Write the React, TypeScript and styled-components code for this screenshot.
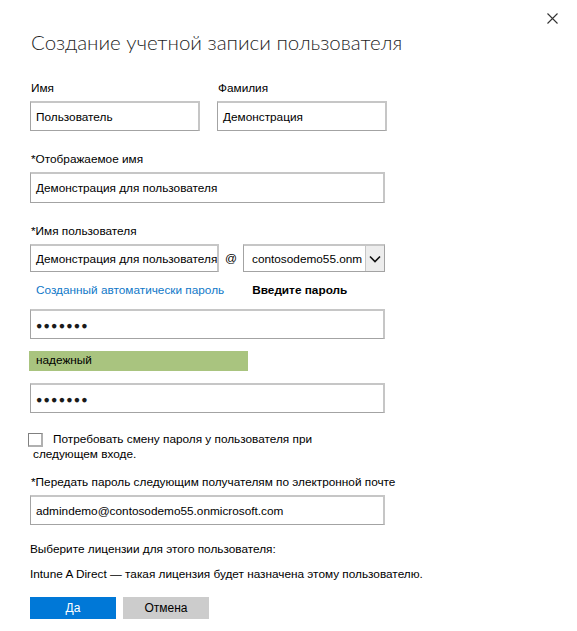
import React from "react";
import styled, { createGlobalStyle } from "styled-components";

const Global = createGlobalStyle`
  html, body { margin: 0; padding: 0; background: #fff; }
  body { font-family: "Segoe UI", "Liberation Sans", Arial, sans-serif; color: #000; }
  * { box-sizing: border-box; }
`;

const Panel = styled.div`
  position: relative;
  width: 577px;
  height: 631px;
  padding: 27px 0 0 30px;
  background: #fff;
  display: flex;
  flex-direction: column;
  font-size: 11.8px;
`;

const Close = styled.button`
  position: absolute;
  top: 11px;
  right: 18px;
  width: 14px;
  height: 14px;
  padding: 0;
  border: none;
  background: transparent;
  display: flex;
  align-items: center;
  justify-content: center;
`;

const Title = styled.h1`
  margin: 0 0 23px 1px;
  font-family: "Segoe UI Light", Lato, "Liberation Sans", sans-serif;
  font-weight: 300;
  font-size: 20.5px;
  line-height: 30px;
  color: #1f1f1f;
`;

const Row = styled.div<{ $gap?: number }>`
  display: flex;
  gap: ${(p) => p.$gap ?? 17}px;
  align-items: flex-start;
`;

const Group = styled.div<{ $mt?: number }>`
  display: flex;
  flex-direction: column;
  margin-top: ${(p) => p.$mt ?? 0}px;
`;

const Label = styled.div`
  line-height: 16px;
  height: 16px;
  margin: 0 0 5px 1px;
  white-space: nowrap;
`;

const Field = styled.div<{ $w: number; $h?: number }>`
  width: ${(p) => p.$w}px;
  height: ${(p) => p.$h ?? 30}px;
  border: 1px solid #a3a3a3;
  border-top: 2px solid #c6c6c6;
  border-right: 2px solid #c6c6c6;
  background: #fff;
  padding: 0 0 0 5px;
  display: flex;
  align-items: center;
  white-space: nowrap;
  overflow: hidden;
`;

const Dots = styled.span`
  font-size: 10.5px;
  letter-spacing: 1.2px;
  color: #1a1a1a;
`;

const At = styled.span`
  line-height: 28px;
  width: 14px;
  text-align: center;
`;

const Select = styled.div`
  width: 142px;
  height: 28px;
  border: 1px solid #a3a3a3;
  border-top: 2px solid #c6c6c6;
  display: flex;
  align-items: stretch;
  overflow: hidden;
`;

const SelectText = styled.div`
  flex: 1;
  padding-left: 8px;
  display: flex;
  align-items: center;
  white-space: nowrap;
  overflow: hidden;
`;

const SelectButton = styled.div`
  width: 19px;
  flex: none;
  background: #ededed;
  border-left: 1px solid #c6c6c6;
  display: flex;
  align-items: center;
  justify-content: center;
`;

const PwdModes = styled.div`
  display: flex;
  margin: 10px 0 0 6px;
  line-height: 16px;
  gap: 28px;
`;

const Link = styled.span`
  color: #0f78c8;
`;

const Bold = styled.span`
  font-weight: 700;
`;

const Strength = styled.div`
  width: 219px;
  height: 20px;
  margin: 12px 0 0 -1px;
  background: #a9c47f;
  line-height: 18px;
  padding-left: 7px;
`;

const Check = styled.div`
  margin: 19px 0 0 -2px;
  line-height: 15px;
`;

const CheckLine = styled.div`
  display: flex;
  align-items: center;
  gap: 10px;
`;

const Box = styled.span`
  width: 15px;
  height: 14px;
  border-style: solid;
  border-width: 1px 2px 2px 1px;
  border-color: #808080 #b0b0b0 #b0b0b0 #808080;
  background: #fff;
`;

const Second = styled.div`
  padding-left: 5px;
`;

const Text = styled.div<{ $mt: number }>`
  margin-top: ${(p) => p.$mt}px;
  line-height: 16px;
  white-space: nowrap;
`;

const Buttons = styled.div`
  display: flex;
  gap: 7px;
  margin-top: 15px;
`;

const Btn = styled.button<{ $primary?: boolean }>`
  width: 86px;
  height: 22px;
  border: none;
  padding: 0;
  font-family: inherit;
  font-size: 12px;
  background: ${(p) => (p.$primary ? "#0078d7" : "#cccccc")};
  color: ${(p) => (p.$primary ? "#fff" : "#000")};
`;

export default function App() {
  return (
    <>
      <Global />
      <Panel>
        <Close aria-label="Закрыть">
          <svg width="11" height="11" viewBox="0 0 11 11">
            <path d="M0.5 0.5 L10.5 10.5 M10.5 0.5 L0.5 10.5" stroke="#333" strokeWidth="1.1" />
          </svg>
        </Close>
        <Title>Создание учетной записи пользователя</Title>

        <Row>
          <Group>
            <Label>Имя</Label>
            <Field $w={170}>Пользователь</Field>
          </Group>
          <Group>
            <Label>Фамилия</Label>
            <Field $w={170}>Демонстрация</Field>
          </Group>
        </Row>

        <Group $mt={20}>
          <Label>*Отображаемое имя</Label>
          <Field $w={355} $h={31}>Демонстрация для пользователя</Field>
        </Group>

        <Group $mt={20}>
          <Label>*Имя пользователя</Label>
          <Row $gap={5}>
            <Field $w={189} $h={28}>Демонстрация для пользователя</Field>
            <At>@</At>
            <Select>
              <SelectText>contosodemo55.onm</SelectText>
              <SelectButton>
                <svg width="12" height="8" viewBox="0 0 12 8">
                  <path d="M1 1.5 L6 6.5 L11 1.5" fill="none" stroke="#111" strokeWidth="1.6" />
                </svg>
              </SelectButton>
            </Select>
          </Row>
        </Group>

        <PwdModes>
          <Link>Созданный автоматически пароль</Link>
          <Bold>Введите пароль</Bold>
        </PwdModes>

        <Group $mt={11}>
          <Field $w={355}><Dots>●●●●●●●</Dots></Field>
        </Group>

        <Strength>надежный</Strength>

        <Group $mt={12}>
          <Field $w={355}><Dots>●●●●●●●</Dots></Field>
        </Group>

        <Check>
          <CheckLine>
            <Box />
            <span>Потребовать смену пароля у пользователя при</span>
          </CheckLine>
          <Second>следующем входе.</Second>
        </Check>

        <Group $mt={12}>
          <Label>*Передать пароль следующим получателям по электронной почте</Label>
          <Field $w={355} $h={30}>admindemo@contosodemo55.onmicrosoft.com</Field>
        </Group>

        <Text $mt={16}>Выберите лицензии для этого пользователя:</Text>
        <Text $mt={9}>Intune A Direct — такая лицензия будет назначена этому пользователю.</Text>

        <Buttons>
          <Btn $primary>Да</Btn>
          <Btn>Отмена</Btn>
        </Buttons>
      </Panel>
    </>
  );
}
